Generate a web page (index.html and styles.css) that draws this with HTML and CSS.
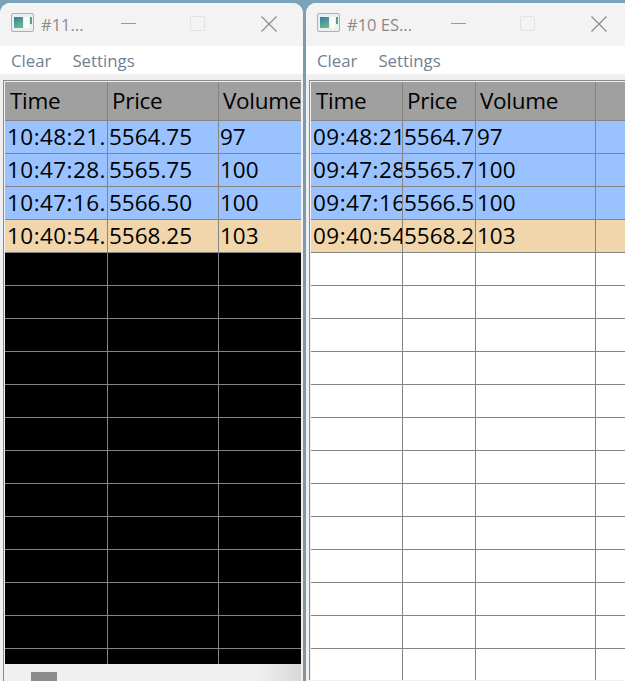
FILE: index.html
```html
<!DOCTYPE html>
<html lang="en">
<head>
<meta charset="utf-8">
<title>Time and Sales</title>
<link rel="stylesheet" href="styles.css">
</head>
<body>
<section class="window window-left">
  <header class="titlebar">
    <svg class="app-icon" width="23" height="19" viewBox="0 0 23 19"><defs><linearGradient id="pic1" x1="0" y1="0" x2="0.4" y2="1"><stop offset="0" stop-color="#2f7fa6"/><stop offset="1" stop-color="#68b58c"/></linearGradient></defs><rect x="0.5" y="0.5" width="22" height="18" rx="1.5" fill="#eceef0" stroke="#a9b1b8"/><rect x="3" y="4" width="9" height="11" fill="url(#pic1)"/><rect x="13" y="4" width="5" height="11" fill="#fbfbfb"/><rect x="19" y="4" width="2" height="7" fill="#4fa37d"/></svg>
    <span class="title">#11...</span>
    <svg class="ctl ctl-min" width="16" height="16" viewBox="0 0 16 16"><path d="M0 7.500h15" stroke="#9a9a9a" stroke-width="1"/></svg>
    <span class="ctl-max"></span>
    <svg class="ctl ctl-close" width="16" height="16" viewBox="0 0 16 16"><path d="M.5.500l15 15M15.500.500l-15 15" stroke="#8b8b8b" stroke-width="1.200"/></svg>
  </header>
  <nav class="menu"><span>Clear</span><span>Settings</span></nav>
  <div class="frame">
    <div class="grid grid-left dark">
      <div class="cell head first">Time</div><div class="cell head">Price</div><div class="cell head">Volume</div>
      <div class="cell buy time">10:48:21.</div><div class="cell buy">5564.75</div><div class="cell buy">97</div>
      <div class="cell buy time">10:47:28.</div><div class="cell buy">5565.75</div><div class="cell buy">100</div>
      <div class="cell buy time">10:47:16.</div><div class="cell buy">5566.50</div><div class="cell buy">100</div>
      <div class="cell sell time">10:40:54.</div><div class="cell sell">5568.25</div><div class="cell sell">103</div>
      <div class="cell"></div><div class="cell"></div><div class="cell"></div>
      <div class="cell"></div><div class="cell"></div><div class="cell"></div>
      <div class="cell"></div><div class="cell"></div><div class="cell"></div>
      <div class="cell"></div><div class="cell"></div><div class="cell"></div>
      <div class="cell"></div><div class="cell"></div><div class="cell"></div>
      <div class="cell"></div><div class="cell"></div><div class="cell"></div>
      <div class="cell"></div><div class="cell"></div><div class="cell"></div>
      <div class="cell"></div><div class="cell"></div><div class="cell"></div>
      <div class="cell"></div><div class="cell"></div><div class="cell"></div>
      <div class="cell"></div><div class="cell"></div><div class="cell"></div>
      <div class="cell"></div><div class="cell"></div><div class="cell"></div>
      <div class="cell"></div><div class="cell"></div><div class="cell"></div>
      <div class="cell"></div><div class="cell"></div><div class="cell"></div>
    </div>
    <div class="hscroll"><div class="thumb"></div></div>
  </div>
</section>
<section class="window window-right">
  <header class="titlebar">
    <svg class="app-icon" width="23" height="19" viewBox="0 0 23 19"><defs><linearGradient id="pic2" x1="0" y1="0" x2="0.4" y2="1"><stop offset="0" stop-color="#2f7fa6"/><stop offset="1" stop-color="#68b58c"/></linearGradient></defs><rect x="0.5" y="0.5" width="22" height="18" rx="1.5" fill="#eceef0" stroke="#a9b1b8"/><rect x="3" y="4" width="9" height="11" fill="url(#pic2)"/><rect x="13" y="4" width="5" height="11" fill="#fbfbfb"/><rect x="19" y="4" width="2" height="7" fill="#4fa37d"/></svg>
    <span class="title">#10 ES...</span>
    <svg class="ctl ctl-min" width="16" height="16" viewBox="0 0 16 16"><path d="M0 7.500h15" stroke="#9a9a9a" stroke-width="1"/></svg>
    <span class="ctl-max"></span>
    <svg class="ctl ctl-close" width="16" height="16" viewBox="0 0 16 16"><path d="M.5.500l15 15M15.500.500l-15 15" stroke="#8b8b8b" stroke-width="1.200"/></svg>
  </header>
  <nav class="menu"><span>Clear</span><span>Settings</span></nav>
  <div class="frame">
    <div class="grid grid-right">
      <div class="cell head first">Time</div><div class="cell head">Price</div><div class="cell head">Volume</div><div class="cell head"></div>
      <div class="cell buy time">09:48:21</div><div class="cell buy">5564.75</div><div class="cell buy">97</div><div class="cell buy"></div>
      <div class="cell buy time">09:47:28</div><div class="cell buy">5565.75</div><div class="cell buy">100</div><div class="cell buy"></div>
      <div class="cell buy time">09:47:16</div><div class="cell buy">5566.50</div><div class="cell buy">100</div><div class="cell buy"></div>
      <div class="cell sell time">09:40:54</div><div class="cell sell">5568.25</div><div class="cell sell">103</div><div class="cell sell"></div>
      <div class="cell"></div><div class="cell"></div><div class="cell"></div><div class="cell"></div>
      <div class="cell"></div><div class="cell"></div><div class="cell"></div><div class="cell"></div>
      <div class="cell"></div><div class="cell"></div><div class="cell"></div><div class="cell"></div>
      <div class="cell"></div><div class="cell"></div><div class="cell"></div><div class="cell"></div>
      <div class="cell"></div><div class="cell"></div><div class="cell"></div><div class="cell"></div>
      <div class="cell"></div><div class="cell"></div><div class="cell"></div><div class="cell"></div>
      <div class="cell"></div><div class="cell"></div><div class="cell"></div><div class="cell"></div>
      <div class="cell"></div><div class="cell"></div><div class="cell"></div><div class="cell"></div>
      <div class="cell"></div><div class="cell"></div><div class="cell"></div><div class="cell"></div>
      <div class="cell"></div><div class="cell"></div><div class="cell"></div><div class="cell"></div>
      <div class="cell"></div><div class="cell"></div><div class="cell"></div><div class="cell"></div>
      <div class="cell"></div><div class="cell"></div><div class="cell"></div><div class="cell"></div>
      <div class="cell"></div><div class="cell"></div><div class="cell"></div><div class="cell"></div>
    </div>
  </div>
</section>
</body>
</html>
```
FILE: styles.css
```css
html, body {
  margin: 0;
  height: 100%;
  overflow: hidden;
}
body {
  position: relative;
  width: 625px;
  height: 681px;
  background: linear-gradient(#7aa3bd, #7d9bae 30px, #87939a);
  font-family: "Open Sans", "Noto Sans", sans-serif;
}
.window {
  position: absolute;
  top: 3px;
  height: 678px;
  background: #f0f0f0;
  border-radius: 10px 10px 0 0;
  overflow: hidden;
  display: flex;
  flex-direction: column;
}
.window-left { left: 0; width: 303px; }
.window-right { left: 306px; width: 319px; border-radius: 10px 0 0 0; }
.titlebar {
  position: relative;
  height: 43px;
  flex: none;
  background: #f3f3f3;
  display: flex;
  align-items: center;
  padding-left: 11px;
  color: #8a8a8a;
  font-size: 16.500px;
}
.app-icon { flex: none; margin: 0 7px 4px 0; }
.title { white-space: nowrap; }
.ctl { position: absolute; top: 13px; }
.ctl-min { left: 121px; }
.ctl-close { left: 261px; }
.ctl-max {
  position: absolute;
  left: 190px;
  top: 13px;
  width: 13px;
  height: 13px;
  border: 1px solid #e2e2e2;
  border-radius: 2px;
}
.window-right .ctl-min { left: 145px; }
.window-right .ctl-max { left: 214px; }
.window-right .ctl-close { left: 285px; }
.menu {
  box-sizing: border-box;
  height: 28px;
  flex: none;
  background: #fff;
  display: flex;
  align-items: center;
  gap: 21px;
  padding: 1px 0 0 11px;
  font-size: 16.800px;
  color: #6f8193;
}
.frame {
  margin: 6px 2px 0 3px;
  flex: 1;
  min-height: 0;
  border-top: 1px solid #8a8a8a;
  border-left: 1px solid #8a8a8a;
  padding: 1px 0 0 1px;
  display: flex;
  flex-direction: column;
  overflow: hidden;
}
.window-right .frame { margin: 6px 0 1px 3px; }
.grid {
  display: grid;
  grid-auto-rows: 33px;
  grid-template-rows: 39px;
  background: #fff;
  font-size: 22.500px;
  line-height: 31px;
  color: #000;
  overflow: hidden;
}
.grid-left { grid-template-columns: 103px 111px 83px; height: 582px; flex: none; }
.grid-right { grid-template-columns: 92px 73px 120px 30px; flex: 1; }
.dark { background: #000; }
.cell {
  box-sizing: border-box;
  border-right: 1px solid #858585;
  border-bottom: 1px solid #858585;
  padding-left: 1px;
  white-space: nowrap;
  overflow: hidden;
}
.time { padding-left: 2px; letter-spacing: 0.45px; }
.head { background: #a0a0a0; padding-left: 4px; line-height: 37px; letter-spacing: -0.3px; }
.head.first { padding-left: 5px; }
.buy { background: #99c2ff; }
.sell { background: #f2d6ab; }
.hscroll {
  flex: 1;
  margin-left: -1px;
  background: linear-gradient(90deg, #f0f0f0 85%, #d8d8d8);
  position: relative;
}
.thumb {
  position: absolute;
  left: 27px;
  top: 8px;
  width: 26px;
  height: 12px;
  background: #8c8c8c;
}
```
